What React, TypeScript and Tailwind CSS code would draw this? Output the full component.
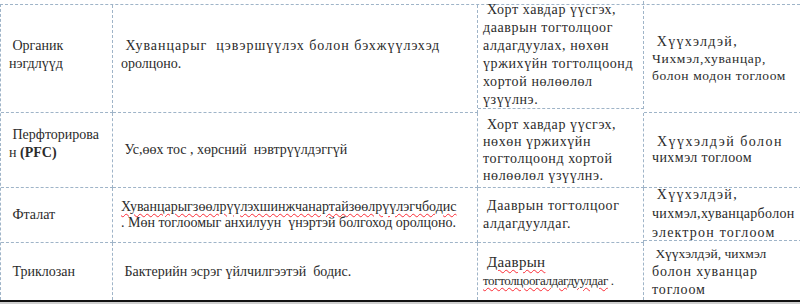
import React from "react";

type Cell = { lines: React.ReactNode[]; cls?: string };

const Lines = ({ lines }: { lines: React.ReactNode[] }) => (
  <div className="flex flex-col">
    {lines.map((l, i) => (
      <span key={i} className="whitespace-pre">
        {l}
      </span>
    ))}
  </div>
);

const wavy = "underline decoration-wavy decoration-red-500 decoration-1 underline-offset-2";

const rows: { h: string; cells: Cell[] }[] = [
  {
    h: "h-[108px]",
    cells: [
      { lines: [" Органик", "нэгдлүүд"], cls: "pb-2" },
      {
        lines: [
          <span className="tracking-[1px]"> Хуванцарыг  цэвэршүүлэх болон бэхжүүлэхэд</span>,
          "оролцоно.",
        ],
        cls: "pb-2",
      },
      {
        lines: [
          " Хорт хавдар үүсгэх,",
          "дааврын тогтолцоог",
          "алдагдуулах, нөхөн",
          "үржихүйн тогтолцоонд",
          "хортой нөлөөлөл",
          "үзүүлнэ.",
        ],
        cls: "-mt-[4px] tracking-[0.6px]",
      },
      {
        lines: [
          <span className="tracking-[1.3px]"> Хүүхэлдэй,</span>,
          <span className="tracking-[0.7px] text-[13.5px]">Чихмэл,хуванцар,</span>,
          <span className="tracking-[0.6px] text-[13.5px]">болон модон тоглоом</span>,
        ],
        cls: "leading-[17px]",
      },
    ],
  },
  {
    h: "h-[75px]",
    cells: [
      {
        lines: [
          " Перфторирова",
          <>
            н <b>(PFC)</b>
          </>,
        ],
        cls: "pb-3",
      },
      { lines: [" Ус,өөх тос , хөрсний  нэвтрүүлдэггүй"] },
      {
        lines: [
          " Хорт хавдар үүсгэх,",
          "нөхөн үржихүйн",
          "тогтолцоонд хортой",
          "нөлөөлөл үзүүлнэ.",
        ],
        cls: "leading-[17px] tracking-[0.6px]",
      },
      {
        lines: [
          <span className="tracking-[1.5px]"> Хүүхэлдэй болон</span>,
          <span className="tracking-[0.4px]">чихмэл тоглоом</span>,
        ],
        cls: "leading-[16px]",
      },
    ],
  },
  {
    h: "h-[55px]",
    cells: [
      { lines: [" Фталат"] },
      {
        lines: [
          <span className={wavy}>Хуванцарыгзөөлрүүлэхшинжчанартайзөөлрүүлэгчбодис</span>,
          ". Мөн тоглоомыг анхилуун  үнэртэй болгоход оролцоно.",
        ],
        cls: "leading-[16px]",
      },
      {
        lines: [" Дааврын тогтолцоог", "алдагдуулдаг."],
        cls: "tracking-[0.6px]",
      },
      {
        lines: [
          <span className="tracking-[1.3px]"> Хүүхэлдэй,</span>,
          <span className="tracking-[0.3px]">чихмэл,хуванцарболон</span>,
          <span className="tracking-[1.2px]">электрон тоглоом</span>,
        ],
        cls: "leading-[19px] -mt-[2px]",
      },
    ],
  },
  {
    h: "h-[57px]",
    cells: [
      { lines: [" Триклозан"] },
      { lines: [" Бактерийн эсрэг үйлчилгээтэй  бодис."] },
      {
        lines: [
          <span className="text-[15px] tracking-[0.3px]">
            {" "}
            <span className={wavy}>Дааврын</span>
          </span>,
          <span className="text-[13px] tracking-[-0.4px]">
            <span className={wavy}>тогтолцоогалдагдуулдаг</span> .
          </span>,
        ],
        cls: "leading-[18px]",
      },
      {
        lines: [
          <span className="text-[13.5px]"> Хүүхэлдэй, чихмэл</span>,
          <span className="tracking-[0.9px]">болон хуванцар</span>,
          <span className="tracking-[0.9px]">тоглоом</span>,
        ],
        cls: "leading-[18px]",
      },
    ],
  },
];

const colCls = ["pl-[8px]", "pl-[8px]", "pl-[5px]", "pl-[8px]"];

export default function App() {
  return (
    <div className="w-[800px] h-[304px] bg-white overflow-hidden flex flex-col [font-family:Liberation_Serif,DejaVu_Serif,serif] text-[14px] leading-[18px] text-[#2b2b2b]">
      <div className="h-[4px] shrink-0" />
      <div className="grid grid-cols-[112px_365px_166px_158px] border-t border-l border-dashed border-[#9fb4c8]">
        {rows.map((r, ri) =>
          r.cells.map((c, ci) => (
            <div
              key={`${ri}-${ci}`}
              className={`${r.h} flex items-center overflow-hidden border-r border-dashed border-[#9fb4c8] ${
                ri < rows.length - 1 ? "border-b" : ""
              } ${colCls[ci]} ${c.cls ?? ""}`}
            >
              <Lines lines={c.lines} />
            </div>
          ))
        )}
      </div>
      <div className="h-[2px] bg-[#111] shrink-0" />
      <div className="flex-1 bg-[#cfcfcf]" />
    </div>
  );
}
